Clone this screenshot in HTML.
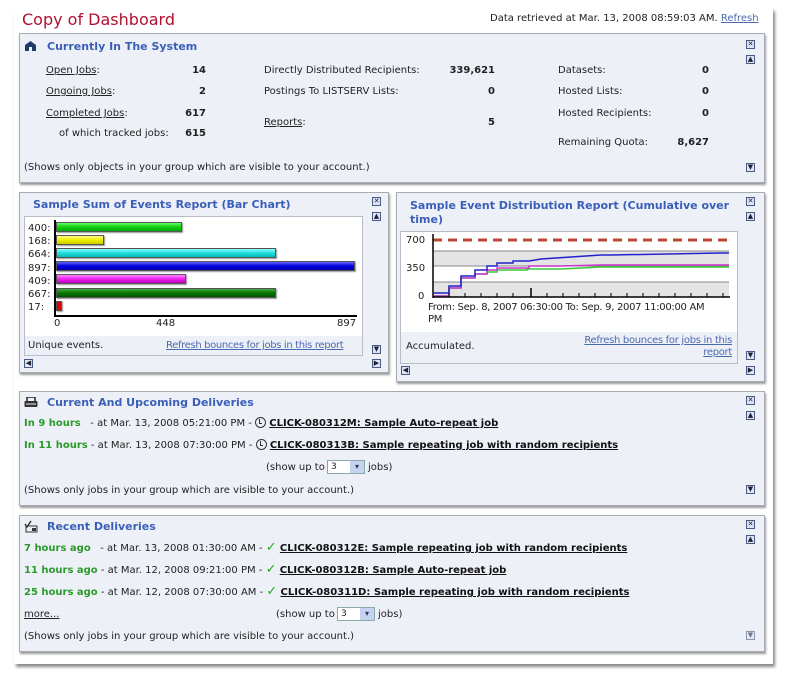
<!DOCTYPE html>
<html><head><meta charset="utf-8"><style>
*{margin:0;padding:0;box-sizing:border-box}
body{width:786px;height:681px;background:#fff;position:relative;overflow:hidden;font-family:"DejaVu Sans",Verdana,sans-serif;font-size:10px;color:#222}
.a{position:absolute;white-space:nowrap;line-height:12px}
.card{position:absolute;left:14px;top:8px;width:759px;height:656px;background:#fff;box-shadow:2px 3px 3px #888}
.p{position:absolute;background:#eef0f8;border:1px solid #a8abb4;box-shadow:1px 2px 2px #999}
.h{font-weight:bold;color:#3a5fb8;font-size:11px}
.b{font-weight:bold}
.r{text-align:right}
.u{text-decoration:underline}
.lk{color:#4a6ab0;text-decoration:underline}
.g{color:#2a9a2a;font-weight:bold}
.job{font-weight:bold;text-decoration:underline;color:#111}
.ck{display:inline-block;width:11px;height:11px;border:1.5px solid #333;border-radius:50%;vertical-align:-2px;position:relative}
.ck:after{content:"";position:absolute;left:3px;top:1px;width:2px;height:4px;border-left:1px solid #333;border-bottom:1px solid #333}
.ic{position:absolute;width:9px;height:9px;border:1px solid #4a5a88;background:#dfe4f2;font-size:7px;line-height:7px;text-align:center;color:#223}
.sel{position:absolute;width:38px;height:14px;border:1px solid #8aa;background:#fff;font-size:9px;line-height:12px;padding-left:3px}
.sel i{position:absolute;right:0;top:0;width:14px;height:12px;background:#c6d3f0;font-style:normal;text-align:center;color:#335;font-size:8px}
.bar{position:absolute;height:10px;left:56px;border:1px solid #555;box-shadow:1px 1px 1px #999}
</style></head><body>
<div class="card"></div>
<div class="a" style="left:22px;top:11px;font-size:16px;line-height:18px;color:#b01030">Copy of Dashboard</div>
<div class="a" style="left:490px;top:13px">Data retrieved at Mar. 13, 2008 08:59:03 AM. <span class="lk">Refresh</span></div>

<div class="p" style="left:19px;top:33px;width:746px;height:150px"></div>
<svg style="position:absolute;left:24px;top:41px" width="13" height="11"><path d="M1 4 L6.5 0 L12 4 Z" fill="#223a6a"/><rect x="1" y="4" width="11" height="6" fill="#223a6a"/><rect x="5" y="6" width="3" height="4" fill="#eef0f8"/></svg>
<div class="a h" style="left:47px;top:41px">Currently In The System</div>
<div class="a" style="left:46px;top:65px"><span class="u">Open Jobs</span>:</div><div class="a b r" style="left:150px;width:56px;top:65px">14</div>
<div class="a" style="left:46px;top:86px"><span class="u">Ongoing Jobs</span>:</div><div class="a b r" style="left:150px;width:56px;top:86px">2</div>
<div class="a" style="left:46px;top:108px"><span class="u">Completed Jobs</span>:</div><div class="a b r" style="left:150px;width:56px;top:108px">617</div>
<div class="a" style="left:59px;top:128px">of which tracked jobs:</div><div class="a b r" style="left:150px;width:56px;top:128px">615</div>
<div class="a" style="left:264px;top:65px">Directly Distributed Recipients:</div><div class="a b r" style="left:430px;width:65px;top:65px">339,621</div>
<div class="a" style="left:264px;top:86px">Postings To LISTSERV Lists:</div><div class="a b r" style="left:430px;width:65px;top:86px">0</div>
<div class="a" style="left:264px;top:117px"><span class="u">Reports</span>:</div><div class="a b r" style="left:430px;width:65px;top:117px">5</div>
<div class="a" style="left:558px;top:65px">Datasets:</div><div class="a b r" style="left:650px;width:59px;top:65px">0</div>
<div class="a" style="left:558px;top:86px">Hosted Lists:</div><div class="a b r" style="left:650px;width:59px;top:86px">0</div>
<div class="a" style="left:558px;top:108px">Hosted Recipients:</div><div class="a b r" style="left:650px;width:59px;top:108px">0</div>
<div class="a" style="left:558px;top:137px">Remaining Quota:</div><div class="a b r" style="left:650px;width:59px;top:137px">8,627</div>
<div class="a" style="left:24px;top:162px">(Shows only objects in your group which are visible to your account.)</div>
<div class="ic" style="left:746px;top:40px">✕</div><div class="ic" style="left:746px;top:55px">▲</div><div class="ic" style="left:746px;top:163px">▼</div>

<div class="p" style="left:19px;top:192px;width:370px;height:181px"></div>
<div class="a h" style="left:33px;top:199px">Sample Sum of Events Report (Bar Chart)</div>
<div class="ic" style="left:372px;top:197px">✕</div><div class="ic" style="left:372px;top:212px">▲</div><div class="ic" style="left:372px;top:345px">▼</div>
<div class="ic" style="left:24px;top:359px">◀</div><div class="ic" style="left:372px;top:359px">▶</div>
<div style="position:absolute;left:24px;top:216px;width:339px;height:140px;border:1px solid #b8bcc8;background:#fff"></div>
<div style="position:absolute;left:25px;top:336px;width:337px;height:19px;background:#eef0f8"></div>
<div class="a" style="left:28px;top:222px;line-height:13.2px">400:<br>168:<br>664:<br>897:<br>409:<br>667:<br>17:</div>
<div style="position:absolute;left:54px;top:220px;width:2px;height:97px;background:#000"></div>
<div style="position:absolute;left:54px;top:315px;width:303px;height:2px;background:#000"></div>
<div class="bar" style="top:222px;width:126px;background:linear-gradient(#6f6,#1c1 50%,#0a0)"></div>
<div class="bar" style="top:235px;width:48px;background:linear-gradient(#ff8,#ee0 50%,#cc0)"></div>
<div class="bar" style="top:248px;width:220px;background:linear-gradient(#8ff,#2dd 50%,#0bb)"></div>
<div class="bar" style="top:261px;width:299px;background:linear-gradient(#66f,#00d 50%,#00a)"></div>
<div class="bar" style="top:274px;width:130px;background:linear-gradient(#f8f,#e2e 50%,#b0b)"></div>
<div class="bar" style="top:288px;width:220px;background:linear-gradient(#4a4,#070 50%,#050)"></div>
<div class="bar" style="top:301px;width:6px;background:#d00"></div>
<div class="a" style="left:54px;top:318px">0</div><div class="a" style="left:156px;top:318px">448</div><div class="a" style="left:337px;top:318px">897</div>
<div class="a" style="left:28px;top:340px">Unique events.</div>
<div class="a lk" style="left:166px;top:340px;letter-spacing:-0.35px">Refresh bounces for jobs in this report</div>

<div class="p" style="left:396px;top:192px;width:369px;height:190px"></div>
<div class="a h" style="left:410px;top:199px;line-height:14px">Sample Event Distribution Report (Cumulative over<br>time)</div>
<div class="ic" style="left:746px;top:197px">✕</div><div class="ic" style="left:746px;top:212px">▲</div><div class="ic" style="left:746px;top:351px">▼</div>
<div class="ic" style="left:401px;top:366px">◀</div><div class="ic" style="left:746px;top:366px">▶</div>
<div style="position:absolute;left:400px;top:231px;width:338px;height:133px;border:1px solid #b8bcc8;background:#fff"></div>
<div style="position:absolute;left:401px;top:332px;width:336px;height:31px;background:#eef0f8"></div>
<svg style="position:absolute;left:401px;top:232px" width="336" height="100">
<rect x="32" y="19" width="296" height="15" fill="#e4e4e4"/><line x1="32" y1="19" x2="328" y2="19" stroke="#888"/><line x1="32" y1="34" x2="328" y2="34" stroke="#888"/>
<rect x="32" y="50" width="296" height="15" fill="#e4e4e4"/><line x1="32" y1="50" x2="328" y2="50" stroke="#888"/>
<line x1="32" y1="8" x2="328" y2="8" stroke="#2a2" stroke-width="3" stroke-dasharray="9 6"/>
<line x1="32" y1="8" x2="328" y2="8" stroke="#d33" stroke-width="3" stroke-dasharray="9 6" opacity=".8"/>
<polyline points="33,64 48,64 48,56 60,56 60,46 74,46 74,42 86,42 86,40 96,40 96,38 126,38 126,37 160,37 200,35 328,35" fill="none" stroke="#3c3" stroke-width="1.5"/>
<polyline points="33,64 48,64 48,56 60,56 60,46 74,46 74,42 86,42 86,38 96,38 96,36 128,36 128,34 160,34 200,33 328,33" fill="none" stroke="#c3c" stroke-width="1.5"/>
<polyline points="33,61 48,61 48,54 60,54 60,44 74,44 74,38 86,38 86,34 96,34 96,31 112,31 112,29 128,29 140,27 170,25 200,23 210,23 320,21 328,21" fill="none" stroke="#22c" stroke-width="1.5"/>
<line x1="32" y1="2" x2="32" y2="66" stroke="#000" stroke-width="1.5"/><line x1="32" y1="65" x2="329" y2="65" stroke="#000" stroke-width="1.5"/>
<g stroke="#000"><line x1="48" y1="61" x2="48" y2="65"/><line x1="64" y1="61" x2="64" y2="65"/><line x1="80" y1="61" x2="80" y2="65"/><line x1="96" y1="61" x2="96" y2="65"/><line x1="112" y1="61" x2="112" y2="65"/><line x1="130" y1="56" x2="130" y2="65" stroke-width="1.5"/><line x1="146" y1="61" x2="146" y2="65"/><line x1="162" y1="61" x2="162" y2="65"/><line x1="178" y1="61" x2="178" y2="65"/><line x1="194" y1="61" x2="194" y2="65"/><line x1="210" y1="61" x2="210" y2="65"/><line x1="226" y1="61" x2="226" y2="65"/><line x1="242" y1="61" x2="242" y2="65"/><line x1="258" y1="61" x2="258" y2="65"/><line x1="274" y1="61" x2="274" y2="65"/><line x1="290" y1="61" x2="290" y2="65"/><line x1="306" y1="61" x2="306" y2="65"/><line x1="322" y1="61" x2="322" y2="65"/></g>
</svg>
<div class="a" style="left:406px;top:235px">700</div><div class="a" style="left:406px;top:263px">350</div><div class="a" style="left:418px;top:291px">0</div>
<div class="a" style="left:428px;top:302px;line-height:12px;letter-spacing:-0.3px">From: Sep. 8, 2007 06:30:00 To: Sep. 9, 2007 11:00:00 AM<br>PM</div>
<div class="a" style="left:406px;top:341px">Accumulated.</div>
<div class="a lk r" style="left:560px;width:172px;top:335px;line-height:12px;letter-spacing:-0.3px">Refresh bounces for jobs in this<br>report</div>

<div class="p" style="left:19px;top:391px;width:746px;height:115px"></div>
<svg style="position:absolute;left:24px;top:397px" width="14" height="11"><rect x="3" y="0" width="8" height="5" fill="none" stroke="#222" stroke-width="1.5"/><rect x="0.5" y="4" width="13" height="6" rx="1" fill="#333"/><line x1="2" y1="7" x2="12" y2="7" stroke="#eee"/></svg>
<div class="a h" style="left:47px;top:397px">Current And Upcoming Deliveries</div>
<div class="ic" style="left:746px;top:396px">✕</div><div class="ic" style="left:746px;top:411px">▲</div><div class="ic" style="left:746px;top:485px">▼</div>
<div class="a" style="left:24px;top:417px"><span class="g">In 9 hours</span>&nbsp;&nbsp; - at Mar. 13, 2008 05:21:00 PM - <span class="ck"></span> <span class="job">CLICK-080312M: Sample Auto-repeat job</span></div>
<div class="a" style="left:24px;top:439px"><span class="g">In 11 hours</span> - at Mar. 13, 2008 07:30:00 PM - <span class="ck"></span> <span class="job">CLICK-080313B: Sample repeating job with random recipients</span></div>
<div class="a" style="left:266px;top:462px">(show up to</div><div class="sel" style="left:327px;top:460px">3<i>▾</i></div><div class="a" style="left:368px;top:462px">jobs)</div>
<div class="a" style="left:24px;top:485px">(Shows only jobs in your group which are visible to your account.)</div>

<div class="p" style="left:19px;top:515px;width:746px;height:137px"></div>
<svg style="position:absolute;left:24px;top:520px" width="14" height="13"><path d="M1 4 L3 7 L7 1" fill="none" stroke="#222" stroke-width="1.3"/><rect x="2" y="6" width="11" height="6" fill="none" stroke="#333"/><rect x="8" y="8" width="4" height="3" fill="#333"/></svg>
<div class="a h" style="left:47px;top:521px">Recent Deliveries</div>
<div class="ic" style="left:746px;top:520px">✕</div><div class="ic" style="left:746px;top:535px">▲</div><div class="ic" style="left:746px;top:631px;opacity:.6">▼</div>
<div class="a" style="left:24px;top:542px"><span class="g">7 hours ago</span>&nbsp;&nbsp; - at Mar. 13, 2008 01:30:00 AM - <span style="color:#2a2;font-weight:bold;font-size:13px">✓</span> <span class="job">CLICK-080312E: Sample repeating job with random recipients</span></div>
<div class="a" style="left:24px;top:564px"><span class="g">11 hours ago</span> - at Mar. 12, 2008 09:21:00 PM - <span style="color:#2a2;font-weight:bold;font-size:13px">✓</span> <span class="job">CLICK-080312B: Sample Auto-repeat job</span></div>
<div class="a" style="left:24px;top:586px"><span class="g">25 hours ago</span> - at Mar. 12, 2008 07:30:00 AM - <span style="color:#2a2;font-weight:bold;font-size:13px">✓</span> <span class="job">CLICK-080311D: Sample repeating job with random recipients</span></div>
<div class="a u" style="left:24px;top:609px">more...</div>
<div class="a" style="left:276px;top:609px">(show up to</div><div class="sel" style="left:337px;top:607px">3<i>▾</i></div><div class="a" style="left:378px;top:609px">jobs)</div>
<div class="a" style="left:24px;top:631px">(Shows only jobs in your group which are visible to your account.)</div>
</body></html>
